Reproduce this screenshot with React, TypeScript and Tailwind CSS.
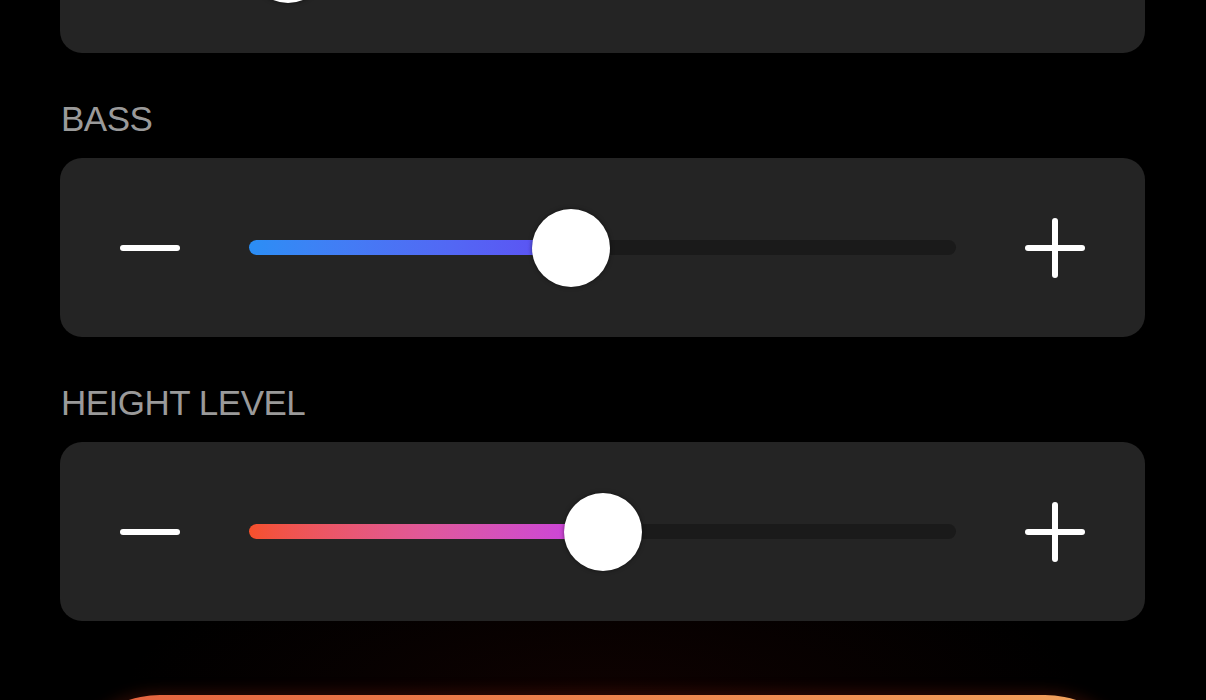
import React from "react";

type SliderProps = { value: number; fill: string };

function SliderCard({ value, fill }: SliderProps) {
  return (
    <div className="h-[179px] shrink-0 rounded-[22px] bg-[#242424] px-[60px] flex items-center">
      <div className="w-[60px] h-[6px] rounded-full bg-white shrink-0" />
      <div className="relative flex-1 mx-[69px] h-[15px] rounded-full bg-[#1a1a1a]">
        <div
          className={"absolute left-0 top-0 h-full rounded-full " + fill}
          style={{ width: `${value}%` }}
        />
        <div
          className="absolute top-1/2 w-[78px] h-[78px] -translate-x-1/2 -translate-y-1/2 rounded-full bg-white shadow-[0_0_4px_rgba(0,0,0,0.5)]"
          style={{ left: `${value}%` }}
        />
      </div>
      <div className="relative w-[60px] h-[60px] shrink-0">
        <div className="absolute left-0 top-1/2 -translate-y-1/2 w-[60px] h-[6px] rounded-full bg-white" />
        <div className="absolute top-0 left-1/2 -translate-x-1/2 w-[6px] h-[60px] rounded-full bg-white" />
      </div>
    </div>
  );
}

function Label({ children }: { children: React.ReactNode }) {
  return (
    <div className="mt-[46px] mb-[19px] h-[40px] leading-[40px] text-[35px] tracking-[-0.5px] text-[#9a9a9a] font-['Liberation_Sans',Arial,sans-serif] pl-[1px]">
      {children}
    </div>
  );
}

export default function App() {
  return (
    <div className="relative h-[700px] w-full overflow-hidden bg-black">
      <div className="absolute inset-x-0 bottom-0 h-[380px] bg-[radial-gradient(ellipse_50%_55%_at_50%_100%,rgba(90,12,6,0.16),rgba(0,0,0,0)_80%)]" />
      <div className="relative flex flex-col px-[60px] pr-[61px]">
        <div className="mt-[-126px]">
          <SliderCard value={5.5} fill="bg-gradient-to-r from-[#2a8ef5] to-[#3a6ef5]" />
        </div>
        <Label>BASS</Label>
        <SliderCard value={45.6} fill="bg-gradient-to-r from-[#2a8ef5] to-[#5e4cf3]" />
        <Label>HEIGHT LEVEL</Label>
        <SliderCard value={50} fill="bg-gradient-to-r from-[#f5502a] via-[#e0589a] to-[#c83ce6]" />
        <div className="mt-[74px] h-[200px] shrink-0 rounded-[100px] bg-gradient-to-r from-[#e4603e] to-[#f2a45e] shadow-[0_-4px_14px_rgba(160,40,15,0.25)]" />
      </div>
    </div>
  );
}
